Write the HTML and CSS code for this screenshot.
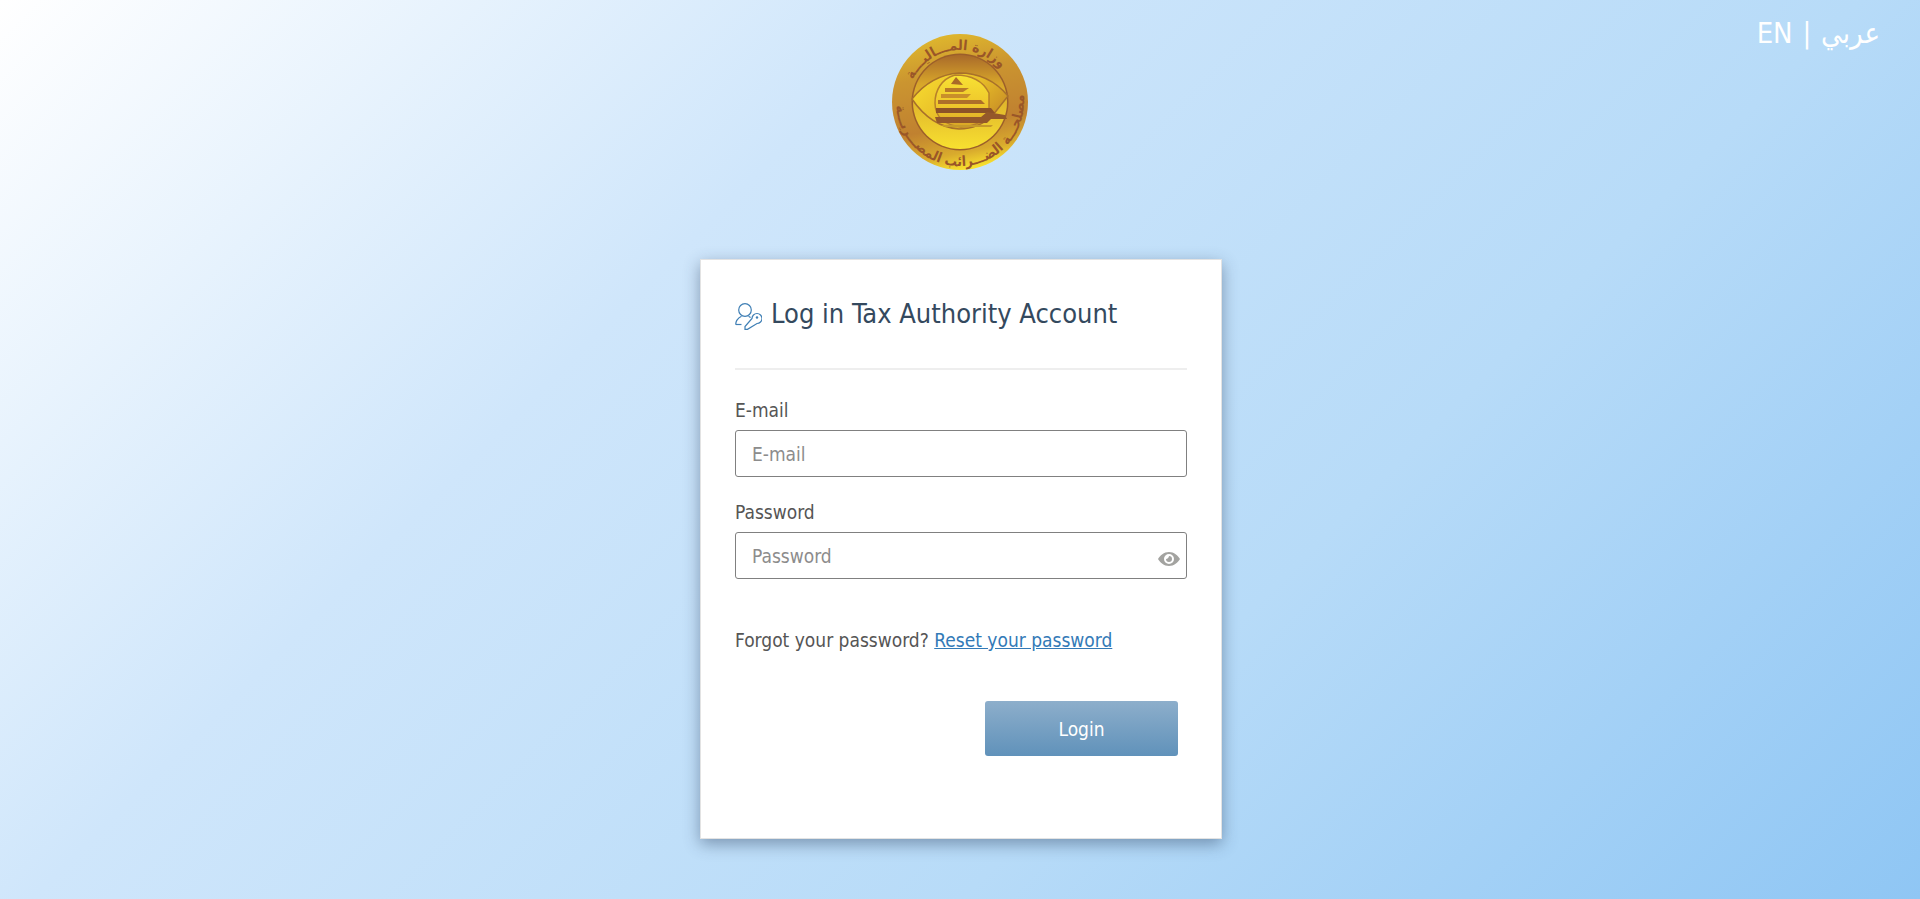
FILE: index.html
```html
<!DOCTYPE html>
<html lang="en">
<head>
    <meta charset="UTF-8">
    <meta name="viewport" content="width=device-width, initial-scale=1.0">
    <title>Login</title>
    <link rel="stylesheet" href="styles.css">
</head>

<body>
    <div class="lang"><a href="#">EN</a> | <a href="#" lang="ar">عربي</a></div>

    <div class="logo">
        <svg width="138" height="138" viewBox="0 0 138 138">
            <defs>
                <linearGradient id="ring" x1="0.3" y1="0" x2="0.5" y2="1">
                    <stop offset="0" stop-color="#e0b92d"/>
                    <stop offset="0.3" stop-color="#cb9530"/>
                    <stop offset="0.68" stop-color="#c08130"/>
                    <stop offset="0.88" stop-color="#d9ab2d"/>
                    <stop offset="1" stop-color="#f8e02e"/>
                </linearGradient>
                <linearGradient id="inner" x1="0" y1="0" x2="0" y2="1">
                    <stop offset="0" stop-color="#a96a2a"/>
                    <stop offset="0.3" stop-color="#d7a52a"/>
                    <stop offset="1" stop-color="#f8e030"/>
                </linearGradient>
                <linearGradient id="eye" x1="0" y1="0" x2="1" y2="0.6">
                    <stop offset="0" stop-color="#f9df30"/>
                    <stop offset="0.6" stop-color="#e6bb28"/>
                    <stop offset="1" stop-color="#c98f26"/>
                </linearGradient>
                <linearGradient id="ball" x1="0" y1="0" x2="0" y2="1">
                    <stop offset="0" stop-color="#f8e234"/>
                    <stop offset="0.6" stop-color="#eec52b"/>
                    <stop offset="1" stop-color="#d8a526"/>
                </linearGradient>
                <path id="ringtop" d="M 20.100 51.200 A 52 52 0 0 1 112.100 39.900"/>
                <path id="ringbottom" d="M 6 57.900 A 64 64 0 1 0 129.100 47.100"/>
            </defs>
            <circle cx="69" cy="69" r="68" fill="url(#ring)"/>
            <circle cx="69" cy="69" r="48.500" fill="#9c5f2a"/>
            <circle cx="69" cy="69" r="47" fill="url(#inner)"/>
            <text class="ring-text" direction="rtl" text-anchor="middle"><textPath href="#ringtop" startOffset="50%">وزارة المـــاليـــة</textPath></text>
            <text class="ring-text" direction="rtl" text-anchor="middle"><textPath href="#ringbottom" startOffset="50%">مصلحـــة الضـــرائب المصـــريـــة</textPath></text>
            <path d="M 21 66 Q 40 42 68 40 Q 98 40 117 63 L 102 82 Q 88 96 68 96 Q 40 94 21 66 Z" fill="url(#eye)" stroke="#a8702a" stroke-width="1.500"/>
            <path d="M 64 42 C 50 46 44 58 44 70 C 44 84 54 92 70 94 C 84 94 92 88 98 82 L 98 60 C 92 48 80 42 64 42 Z" fill="url(#ball)" stroke="#b8802a" stroke-width="1.500"/>
            <path d="M 60 51 L 65 44 L 72 52 Z" fill="#a96a28"/>
            <path d="M 54 55 H 78 L 72 59 H 54 Z" fill="#b87a28"/>
            <path d="M 50 61 H 80 L 76 65 H 50 Z" fill="#c98f2a"/>
            <path d="M 47 67 H 90 L 94 71 H 47 Z" fill="#ad6e2a"/>
            <path d="M 45 75 H 100 L 104 80 H 45 Z" fill="#8c5228"/>
            <path d="M 44 84 H 90 L 96 79 L 114 82 L 116 86 L 100 86 L 96 90 H 46 Z" fill="#94582a"/>
            <path d="M 50 92 H 102 L 100 94 H 54 Z" fill="#c69a2a"/>
        </svg>
    </div>

    <div class="card">
        <div class="card-title">
            <svg class="title-icon" width="27" height="27" viewBox="0 0 27 27" fill="none" stroke="#3f7fb5" stroke-width="1.200">
                <circle cx="10" cy="7" r="6.300"/>
                <path d="M0.700 21.500 C0.700 17 3.500 14.800 6.500 13.200 M13.500 13.200 C14.300 13.600 15 14 15.600 14.500"/>
                <path d="M0.700 21.500 H6.500"/>
                <path d="M17 15.500 A5 5 0 1 1 22 20.500 L12.500 26.300 L10 26.300 L10 23.500 Z"/>
                <circle cx="22" cy="14.500" r="1.200" fill="#3f7fb5" stroke="none"/>
            </svg>
            <h1>Log in Tax Authority Account</h1>
        </div>

        <form class="form">
            <label class="field-label">E-mail</label>
            <div class="field">
                <input type="text" placeholder="E-mail">
            </div>

            <label class="field-label">Password</label>
            <div class="field">
                <input type="password" placeholder="Password">
                <svg class="eye" width="22" height="16" viewBox="0 0 22 16">
                    <path fill="#a3a3a0" fill-rule="evenodd" d="M11 1 C16 1 20 4.500 22 8 C20 11.500 16 15 11 15 C6 15 2 11.500 0 8 C2 4.500 6 1 11 1 Z M11 3 A5 5 0 1 0 11 13 A5 5 0 1 0 11 3 Z"/>
                    <path fill="#a3a3a0" d="M11 5 A3 3 0 1 1 8 8 C9.500 8 11 6.500 11 5 Z"/>
                </svg>
            </div>

            <p class="forgot">Forgot your password? <a href="#">Reset your password</a></p>

            <div class="actions">
                <button type="button">Login</button>
            </div>
        </form>
    </div>
</body>
</html>
```

FILE: styles.css
```css
* {
    margin: 0;
    padding: 0;
    box-sizing: border-box;
}

html, body {
    height: 100%;
}

body {
    position: relative;
    overflow: hidden;
    padding-top: 33px;
    background: linear-gradient(135deg, #ffffff 0%, #cfe6fb 33%, #b7dbf8 66%, #8fc6f4 100%);
    font-family: "DejaVu Sans", "Noto Sans", sans-serif;
    font-stretch: condensed;
    color: #555;
}

.lang {
    position: absolute;
    top: 16px;
    right: 40px;
    color: #fff;
    font-size: 29px;
    line-height: 35px;
    word-spacing: 1.5px;
}

.lang a {
    color: #fff;
    text-decoration: none;
}

.logo {
    height: 138px;
    text-align: center;
}

.ring-text {
    font-family: "DejaVu Sans", sans-serif;
    font-size: 14px;
    font-weight: bold;
    fill: #9a5628;
}

.card {
    width: 522px;
    height: 580px;
    margin: 88px 0 0 700px;
    padding: 34px 34px 0;
    background: #fff;
    border: 1px solid #e3e3e3;
    box-shadow: 0 5px 15px rgba(40, 60, 90, 0.45);
}

.card-title {
    display: flex;
    align-items: flex-start;
    gap: 9px;
    height: 74px;
}

.title-icon {
    flex: none;
    margin-top: 9px;
}

.card-title h1 {
    font-size: 27px;
    font-weight: 400;
    line-height: 40px;
    color: #34495e;
}

.form {
    padding-top: 28px;
    border-top: 2px solid #eeeeee;
}

.field-label {
    display: block;
    font-size: 19px;
    line-height: 25px;
    margin-bottom: 7px;
}

.field {
    position: relative;
    margin-bottom: 23px;
}

.field input {
    display: block;
    width: 100%;
    height: 47px;
    padding: 0 16px;
    border: 1px solid #808080;
    border-radius: 3px;
    font-family: inherit;
    font-stretch: inherit;
    font-size: 19px;
    color: #555;
}

.field input::placeholder {
    color: #8c8c8c;
}

.eye {
    position: absolute;
    right: 7px;
    top: 19px;
}

.forgot {
    margin-top: 49px;
    font-size: 19px;
    line-height: 25px;
}

.forgot a {
    color: #337ab7;
}

.actions {
    display: flex;
    justify-content: flex-end;
    padding-right: 9px;
    margin-top: 48px;
}

.actions button {
    width: 193px;
    height: 55px;
    border: 0;
    border-radius: 3px;
    background: linear-gradient(#8daecb, #6092ba);
    color: #fff;
    font-family: inherit;
    font-stretch: inherit;
    font-size: 19px;
}
```
